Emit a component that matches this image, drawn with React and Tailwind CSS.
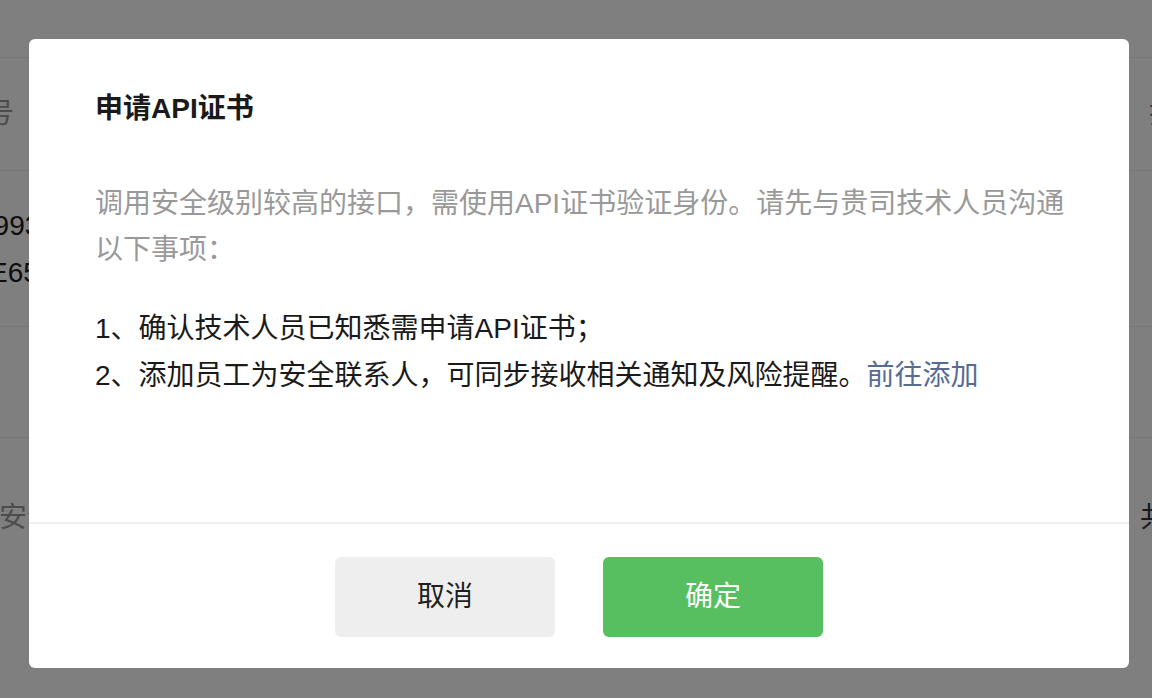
export default function App() {
  const font = { fontFamily: '"Liberation Sans", "Noto Sans CJK SC", sans-serif' };
  return (
    <div className="relative h-[698px] w-full overflow-hidden bg-white" style={font}>
      {/* background page */}
      <div className="flex flex-col">
        <div className="h-[57px]" />
        <div className="flex h-[113px] items-center justify-between border-t border-[#eeeeee]">
          <span className="-ml-[70px] text-[28px] text-[#999999]">商户号</span>
          <span className="-mr-[53px] text-[28px] text-[#777777]">操作</span>
        </div>
        <div className="flex h-[156px] flex-col justify-center border-t border-[#eeeeee] text-[28px] leading-[47px] text-[#1a1a1a]">
          <span className="-ml-[22px]">1993A2</span>
          <span className="-ml-[11px]">E65F0</span>
        </div>
        <div className="h-[111px] border-t border-[#eeeeee]" />
        <div className="flex h-[160px] items-center justify-between border-t border-[#eeeeee]">
          <span className="-ml-[1px] text-[28px] text-[#999999]">安全联系人</span>
          <span className="-mr-[16px] text-[28px] text-[#333333]">共</span>
        </div>
      </div>

      {/* overlay */}
      <div className="fixed inset-0 flex items-start bg-black/50 pl-[29px] pt-[39px]">
        <div className="flex h-[629px] w-[1100px] flex-col rounded-[6px] bg-white">
          <div className="flex flex-1 flex-col pl-[66px] pr-[60px] pt-[50px]">
            <div className="text-[28px] font-semibold leading-[40px] text-[#1a1a1a]">申请API证书</div>
            <p className="mt-[52px] text-[28px] leading-[46px] text-[#999999]">
              调用安全级别较高的接口，需使用API证书验证身份。请先与贵司技术人员沟通以下事项：
            </p>
            <div className="mt-[32px] text-[28px] leading-[47px] text-[#1a1a1a]">
              <p>1、确认技术人员已知悉需申请API证书；</p>
              <p>
                2、添加员工为安全联系人，可同步接收相关通知及风险提醒。
                <span className="text-[#576b95]">前往添加</span>
              </p>
            </div>
          </div>
          <div className="flex justify-center gap-[48px] border-t-2 border-[#efefef] pb-[31px] pt-[33px]">
            <button className="flex h-[80px] w-[220px] items-center justify-center rounded-[6px] bg-[#eeeeee] text-[28px] font-normal text-[#1f1f1f]">
              取消
            </button>
            <button className="flex h-[80px] w-[220px] items-center justify-center rounded-[6px] bg-[#58bf60] text-[28px] font-normal text-white">
              确定
            </button>
          </div>
        </div>
      </div>
    </div>
  );
}
